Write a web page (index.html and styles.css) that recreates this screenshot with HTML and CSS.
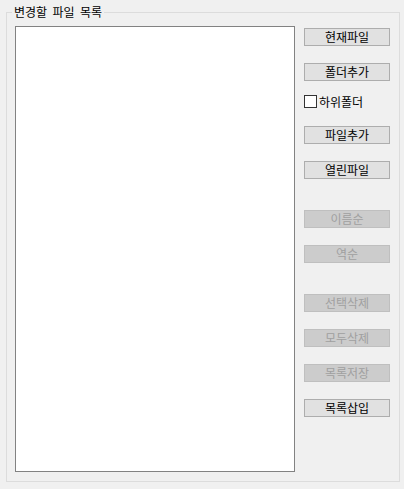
FILE: index.html
```html
<!DOCTYPE html>
<html lang="ko">
<head>
<meta charset="utf-8">
<link rel="stylesheet" href="styles.css">
</head>
<body>
<fieldset class="group">
  <legend class="group-title">변경할 파일 목록</legend>
  <div class="group-body">
    <div class="listbox"></div>
    <div class="side">
      <div class="btn">현재파일</div>
      <div class="btn gap-s">폴더추가</div>
      <label class="check"><span class="check-box"></span><span class="check-label">하위폴더</span></label>
      <div class="btn after-check">파일추가</div>
      <div class="btn gap-s">열린파일</div>
      <div class="btn disabled gap-l">이름순</div>
      <div class="btn disabled gap-s">역순</div>
      <div class="btn disabled gap-l">선택삭제</div>
      <div class="btn disabled gap-s">모두삭제</div>
      <div class="btn disabled gap-s">목록저장</div>
      <div class="btn gap-s">목록삽입</div>
    </div>
  </div>
</fieldset>
</body>
</html>
```
FILE: styles.css
```css
html, body {
  margin: 0;
  padding: 0;
  background: #f0f0f0;
  font-family: "Noto Sans CJK KR", "Noto Sans", sans-serif;
  font-size: 12px;
  color: #000;
}
body {
  padding: 4px 4px 7px 6px;
  width: 404px;
  height: 489px;
  box-sizing: border-box;
}
.group {
  margin: 0;
  border: 1px solid #dcdcdc;
  padding: 6px 8px 9px 8px;
  height: 478px;
  box-sizing: border-box;
}
.group-title {
  padding: 0 2px;
  margin-left: -3px;
  line-height: 16px;
  height: 16px;
  word-spacing: 2px;
}
.group-body {
  display: flex;
  gap: 9px;
  height: 446px;
}
.listbox {
  width: 280px;
  height: 446px;
  box-sizing: border-box;
  border: 1px solid #828282;
  background: #fff;
}
.side {
  width: 86px;
  display: flex;
  flex-direction: column;
  padding-top: 2px;
}
.btn {
  height: 18px;
  box-sizing: border-box;
  border: 1px solid #adadad;
  background: #e1e1e1;
  text-align: center;
  line-height: 16px;
  font-size: 12px;
  color: #000;
}
.btn.disabled {
  background: #cccccc;
  border-color: #bfbfbf;
  color: #a0a0a0;
}
.gap-s { margin-top: 17px; }
.gap-l { margin-top: 31px; }
.after-check { margin-top: 18px; }
.check {
  display: flex;
  align-items: center;
  margin-top: 14px;
  height: 13px;
}
.check-box {
  width: 13px;
  height: 13px;
  box-sizing: border-box;
  border: 1px solid #333;
  background: #fff;
  flex: none;
}
.check-label {
  margin-left: 2px;
  line-height: 13px;
}
```
